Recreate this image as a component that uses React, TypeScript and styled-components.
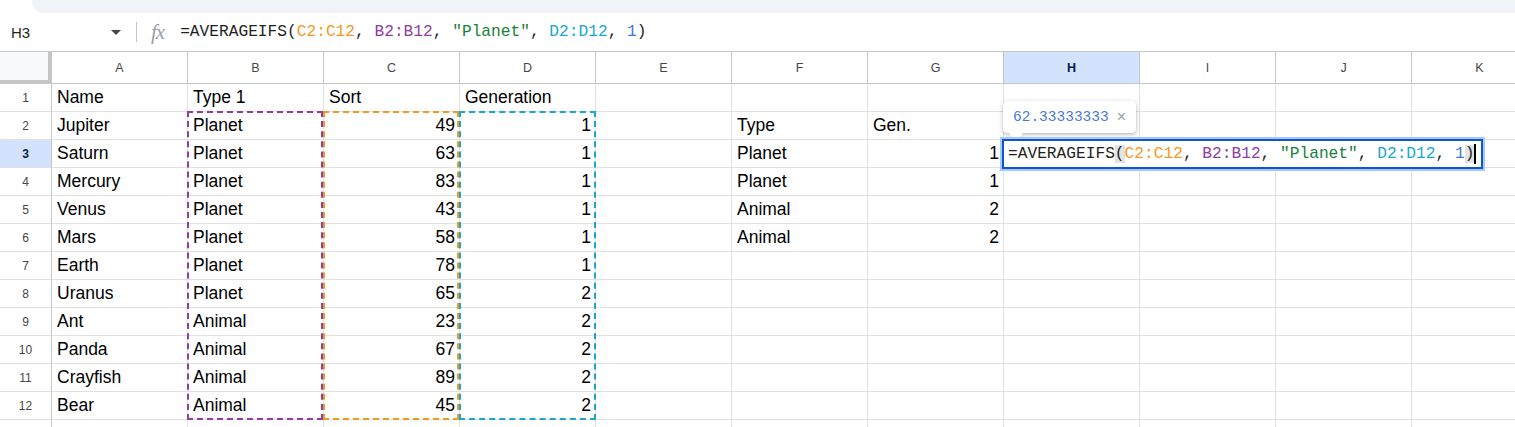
import React from "react";
import styled, { createGlobalStyle } from "styled-components";

const GlobalStyle = createGlobalStyle`
  html, body {
    margin: 0;
    padding: 0;
    background: #ffffff;
    overflow: hidden;
  }
  body {
    font-family: "Liberation Sans", Arial, sans-serif;
  }
`;

const COL_W = 136;
const HEAD_W = 52;
const HEAD_H = 32;
const ROW_H = 28;
const COLS = ["A", "B", "C", "D", "E", "F", "G", "H", "I", "J", "K"];

const RANGE = {
  orange: "#f5981f",
  purple: "#8e3ea3",
  cyan: "#17a7cf",
  green: "#188038",
  blue: "#3c78d8",
};

const Page = styled.div`
  width: 1515px;
  height: 427px;
  overflow: hidden;
  display: flex;
  flex-direction: column;
`;

const TopStrip = styled.div`
  height: 13px;
  margin-left: 32px;
  background: #f0f4f9;
  border-bottom-left-radius: 12px;
  flex-shrink: 0;
`;

const FormulaBar = styled.div`
  height: 38px;
  display: flex;
  align-items: center;
  border-bottom: 1px solid #c4c7c5;
  flex-shrink: 0;
`;

const NameBox = styled.div`
  width: 100px;
  padding-left: 11px;
  font-size: 15px;
  color: #1f1f1f;
`;

const Caret = styled.div`
  width: 0;
  height: 0;
  border-left: 5px solid transparent;
  border-right: 5px solid transparent;
  border-top: 5px solid #444746;
  margin-right: 15px;
`;

const Divider = styled.div`
  width: 1px;
  height: 20px;
  background: #c4c7c5;
  margin-right: 14px;
`;

const Fx = styled.span`
  font-family: "Liberation Serif", "Times New Roman", serif;
  font-style: italic;
  font-size: 21px;
  color: #9aa0a6;
  margin-right: 16px;
  letter-spacing: -1px;
`;

const Mono = styled.span`
  font-family: "Liberation Mono", "DejaVu Sans Mono", monospace;
  font-size: 16.2px;
  color: #1f1f1f;
  white-space: pre;
`;

const Tok = styled.span<{ $c?: string; $paren?: boolean }>`
  color: ${(p) => p.$c || "#1f1f1f"};
  background: ${(p) => (p.$paren ? "#e3e3e3" : "transparent")};
`;

const Sheet = styled.div`
  position: relative;
  flex: 1;
  overflow: hidden;
`;

const Grid = styled.div`
  display: grid;
  grid-template-columns: ${HEAD_W}px repeat(${COLS.length}, ${COL_W}px);
  grid-template-rows: ${HEAD_H}px;
  grid-auto-rows: ${ROW_H}px;
`;

const Corner = styled.div`
  background: #f8f9fa;
  border-right: 4px solid #c4c7c5;
  border-bottom: 4px solid #c4c7c5;
  box-sizing: border-box;
`;

const ColHead = styled.div<{ $active?: boolean }>`
  box-sizing: border-box;
  border-right: 1px solid #c4c7c5;
  border-bottom: 1px solid #c4c7c5;
  background: ${(p) => (p.$active ? "#d3e3fd" : "#ffffff")};
  color: ${(p) => (p.$active ? "#041e49" : "#444746")};
  font-weight: ${(p) => (p.$active ? 700 : 400)};
  font-size: 12.5px;
  display: flex;
  align-items: center;
  justify-content: center;
  padding-top: 1px;
`;

const RowHead = styled.div<{ $active?: boolean }>`
  box-sizing: border-box;
  border-right: 1px solid #c4c7c5;
  border-bottom: 1px solid #e1e1e1;
  background: ${(p) => (p.$active ? "#d3e3fd" : "#ffffff")};
  color: ${(p) => (p.$active ? "#041e49" : "#444746")};
  font-weight: ${(p) => (p.$active ? 700 : 400)};
  font-size: 12px;
  display: flex;
  align-items: center;
  justify-content: center;
`;

const Cell = styled.div<{ $num?: boolean }>`
  box-sizing: border-box;
  border-right: 1px solid #e1e1e1;
  border-bottom: 1px solid #e1e1e1;
  font-size: 17.5px;
  line-height: 27px;
  color: #000000;
  padding: 0 4px 0 5px;
  text-align: ${(p) => (p.$num ? "right" : "left")};
  white-space: nowrap;
  overflow: hidden;
`;

const RangeBox = styled.div<{ $color: string }>`
  position: absolute;
  box-sizing: border-box;
  border: 2px dashed ${(p) => p.$color};
  pointer-events: none;
`;

const Editor = styled.div`
  position: absolute;
  box-sizing: border-box;
  height: 30px;
  background: #ffffff;
  border: 2px solid #0b57d0;
  box-shadow: 0 0 0 2px #a8c7fa;
  display: flex;
  align-items: center;
  padding-left: 4px;
  padding-right: 5px;
`;

const Cursor = styled.span`
  display: inline-block;
  width: 2px;
  height: 20px;
  background: #000000;
  vertical-align: middle;
`;

const Tooltip = styled.div`
  position: absolute;
  box-sizing: border-box;
  height: 32px;
  background: #ffffff;
  border-radius: 4px;
  box-shadow: 0 1px 3px rgba(60, 64, 67, 0.3), 0 2px 6px rgba(60, 64, 67, 0.15);
  display: flex;
  align-items: center;
  padding: 0 10px 0 10px;
  gap: 8px;
  &::after {
    content: "";
    position: absolute;
    left: 8px;
    bottom: -6px;
    width: 10px;
    height: 10px;
    background: #ffffff;
    transform: rotate(45deg);
    box-shadow: 2px 2px 2px rgba(60, 64, 67, 0.15);
  }
`;

const TipValue = styled.span`
  font-family: "Liberation Mono", "DejaVu Sans Mono", monospace;
  font-size: 14.5px;
  color: #4a7bd4;
`;

const TipClose = styled.span`
  font-size: 16px;
  color: #9aa0a6;
  line-height: 1;
`;

type Val = string | number | undefined;

const data: Record<number, Val[]> = {
  1: ["Name", "Type 1", "Sort", "Generation"],
  2: ["Jupiter", "Planet", 49, 1, undefined, "Type", "Gen."],
  3: ["Saturn", "Planet", 63, 1, undefined, "Planet", 1],
  4: ["Mercury", "Planet", 83, 1, undefined, "Planet", 1],
  5: ["Venus", "Planet", 43, 1, undefined, "Animal", 2],
  6: ["Mars", "Planet", 58, 1, undefined, "Animal", 2],
  7: ["Earth", "Planet", 78, 1],
  8: ["Uranus", "Planet", 65, 2],
  9: ["Ant", "Animal", 23, 2],
  10: ["Panda", "Animal", 67, 2],
  11: ["Crayfish", "Animal", 89, 2],
  12: ["Bear", "Animal", 45, 2],
};

const colLeft = (c: number) => HEAD_W + COL_W * c;
const rowTop = (r: number) => HEAD_H + ROW_H * (r - 1);

const App: React.FC = () => {
  const rows = Array.from({ length: 13 }, (_, i) => i + 1);
  return (
    <Page>
      <GlobalStyle />
      <TopStrip />
      <FormulaBar>
        <NameBox>H3</NameBox>
        <Caret />
        <Divider />
        <Fx>fx</Fx>
        <Mono>
          <Tok>=AVERAGEIFS(</Tok>
          <Tok $c={RANGE.orange}>C2:C12</Tok>
          <Tok>, </Tok>
          <Tok $c={RANGE.purple}>B2:B12</Tok>
          <Tok>, </Tok>
          <Tok $c={RANGE.green}>"Planet"</Tok>
          <Tok>, </Tok>
          <Tok $c={RANGE.cyan}>D2:D12</Tok>
          <Tok>, </Tok>
          <Tok $c={RANGE.blue}>1</Tok>
          <Tok>)</Tok>
        </Mono>
      </FormulaBar>
      <Sheet>
        <Grid>
          <Corner />
          {COLS.map((c) => (
            <ColHead key={c} $active={c === "H"}>
              {c}
            </ColHead>
          ))}
          {rows.map((r) => (
            <React.Fragment key={r}>
              <RowHead $active={r === 3}>{r <= 12 ? r : ""}</RowHead>
              {COLS.map((c, ci) => {
                const v = data[r]?.[ci];
                return (
                  <Cell key={c} $num={typeof v === "number"}>
                    {v}
                  </Cell>
                );
              })}
            </React.Fragment>
          ))}
        </Grid>

        <RangeBox
          $color={RANGE.purple}
          style={{ left: colLeft(1) - 1, top: rowTop(2) - 1, width: COL_W, height: ROW_H * 11 + 1 }}
        />
        <RangeBox
          $color={RANGE.orange}
          style={{ left: colLeft(2) - 1, top: rowTop(2) - 1, width: COL_W, height: ROW_H * 11 + 1 }}
        />
        <RangeBox
          $color={RANGE.cyan}
          style={{ left: colLeft(3) - 1, top: rowTop(2) - 1, width: COL_W + 1, height: ROW_H * 11 + 1 }}
        />

        <Tooltip style={{ left: colLeft(7) - 1, top: rowTop(2) - 11 }}>
          <TipValue>62.33333333</TipValue>
          <TipClose>×</TipClose>
        </Tooltip>

        <Editor style={{ left: colLeft(7) - 2, top: rowTop(3) - 1 }}>
          <Mono>
            <Tok>=AVERAGEIFS</Tok>
            <Tok $paren>(</Tok>
            <Tok $c={RANGE.orange}>C2:C12</Tok>
            <Tok>, </Tok>
            <Tok $c={RANGE.purple}>B2:B12</Tok>
            <Tok>, </Tok>
            <Tok $c={RANGE.green}>"Planet"</Tok>
            <Tok>, </Tok>
            <Tok $c={RANGE.cyan}>D2:D12</Tok>
            <Tok>, </Tok>
            <Tok $c={RANGE.blue}>1</Tok>
            <Tok $paren>)</Tok>
          </Mono>
          <Cursor />
        </Editor>
      </Sheet>
    </Page>
  );
};

export default App;
